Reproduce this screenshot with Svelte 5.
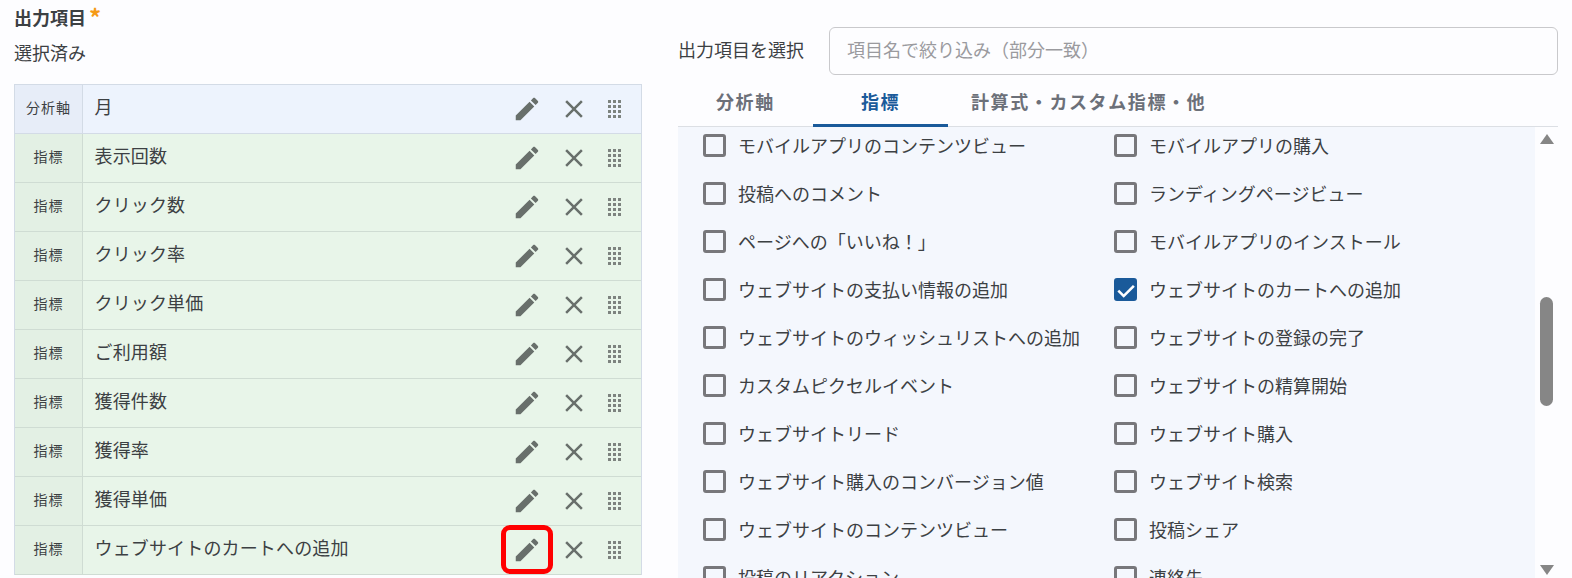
<script>
	const selected = [
		{ kind: '分析軸', name: '月', axis: true },
		{ kind: '指標', name: '表示回数' },
		{ kind: '指標', name: 'クリック数' },
		{ kind: '指標', name: 'クリック率' },
		{ kind: '指標', name: 'クリック単価' },
		{ kind: '指標', name: 'ご利用額' },
		{ kind: '指標', name: '獲得件数' },
		{ kind: '指標', name: '獲得率' },
		{ kind: '指標', name: '獲得単価' },
		{ kind: '指標', name: 'ウェブサイトのカートへの追加', marked: true }
	];

	const tabs = ['分析軸', '指標', '計算式・カスタム指標・他'];

	const options = [
		['モバイルアプリのコンテンツビュー', 'モバイルアプリの購入'],
		['投稿へのコメント', 'ランディングページビュー'],
		['ページへの「いいね！」', 'モバイルアプリのインストール'],
		['ウェブサイトの支払い情報の追加', 'ウェブサイトのカートへの追加'],
		['ウェブサイトのウィッシュリストへの追加', 'ウェブサイトの登録の完了'],
		['カスタムピクセルイベント', 'ウェブサイトの精算開始'],
		['ウェブサイトリード', 'ウェブサイト購入'],
		['ウェブサイト購入のコンバージョン値', 'ウェブサイト検索'],
		['ウェブサイトのコンテンツビュー', '投稿シェア'],
		['投稿のリアクション', '連絡先']
	].flat();

	const checked = 'ウェブサイトのカートへの追加';
</script>

<main class="page">
	<section class="left">
		<h2 class="title">出力項目<span class="req">*</span></h2>
		<p class="sub">選択済み</p>
		<div class="table">
			{#each selected as row}
				<div class="row" class:axis={row.axis}>
					<div class="kind">{row.kind}</div>
					<div class="name">{row.name}</div>
					<div class="edit" class:marked={row.marked}>
						<svg viewBox="0 0 24 24" width="30" height="30"><path d="M3 17.25V21h3.75L17.81 9.94l-3.75-3.75L3 17.25zM20.71 7.04c.39-.39.39-1.02 0-1.41l-2.34-2.34c-.39-.39-1.02-.39-1.41 0l-1.83 1.83 3.75 3.75 1.83-1.83z" /></svg>
					</div>
					<svg class="close" viewBox="0 0 24 24" width="30" height="30"><path d="M19 6.41L17.59 5 12 10.59 6.41 5 5 6.41 10.59 12 5 17.59 6.41 19 12 13.41 17.59 19 19 17.59 13.41 12z" /></svg>
					<svg class="drag" viewBox="0 0 13 18" width="13" height="18">
						{#each [0, 5, 10] as x}
							{#each [0, 5, 10, 15] as y}
								<rect {x} {y} width="3" height="3" />
							{/each}
						{/each}
					</svg>
				</div>
			{/each}
		</div>
	</section>

	<section class="right">
		<div class="search">
			<span class="search-label">出力項目を選択</span>
			<input class="input" type="text" placeholder="項目名で絞り込み（部分一致）" />
		</div>
		<div class="tabs">
			{#each tabs as tab, i}
				<div class="tab" class:active={i === 1}>{tab}</div>
			{/each}
		</div>
		<div class="body">
			<div class="list">
				{#each options as option}
					<label class="option">
						<span class="box" class:on={option === checked}>
							{#if option === checked}
								<svg viewBox="0 0 24 24" width="22" height="22"><path d="M9.5 17.6 4.6 12.7l-2 2 6.9 6.9L21.6 9.5l-2-2z" /></svg>
							{/if}
						</span>
						<span>{option}</span>
					</label>
				{/each}
			</div>
			<div class="scrollbar">
				<span class="arrow up"></span>
				<span class="thumb"></span>
				<span class="arrow down"></span>
			</div>
		</div>
	</section>
</main>

<style>
	:global(body) {
		margin: 0;
		background: #fdfdff;
		overflow: hidden;
	}
	.page {
		display: flex;
		height: 578px;
		overflow: hidden;
		box-sizing: border-box;
		padding: 0 14px;
		gap: 36px;
		font-family: 'Noto Sans CJK JP', 'Noto Sans', sans-serif;
		color: #3c4043;
	}
	.left {
		width: 628px;
		flex: none;
	}
	.title {
		margin: 5px 0 0;
		font-size: 18px;
		line-height: 24px;
		font-weight: 700;
	}
	.req {
		color: #f59a16;
		margin-left: 3px;
		font-size: 24px;
		line-height: 20px;
		vertical-align: -2px;
	}
	.sub {
		margin: 11px 0 0;
		font-size: 18px;
		line-height: 24px;
	}
	.table {
		margin-top: 20px;
		border: 1px solid #d3dbe6;
		border-bottom: none;
	}
	.row {
		display: flex;
		align-items: center;
		height: 49px;
		box-sizing: border-box;
		background: #e8f5e9;
		border-bottom: 1px solid #cfdcd3;
	}
	.row.axis {
		background: #edf3fd;
		border-bottom-color: #d3dbe6;
	}
	.kind {
		width: 68px;
		height: 100%;
		box-sizing: border-box;
		flex: none;
		display: flex;
		align-items: center;
		justify-content: center;
		padding-bottom: 5px;
		font-size: 14px;
		letter-spacing: 1px;
		background: #e3f0e4;
		border-right: 1px solid #cfdcd3;
	}
	.axis .kind {
		background: #e7edf8;
		border-right-color: #d3dbe6;
	}
	.name {
		flex: 1;
		padding: 0 0 6px 11.5px;
		font-size: 18px;
		letter-spacing: 0.15px;
	}
	.edit {
		position: relative;
		display: flex;
	}
	.marked::after {
		content: '';
		position: absolute;
		left: -11px;
		top: -10px;
		width: 42px;
		height: 39px;
		border: 5px solid #ff0000;
		border-radius: 9px;
	}
	svg {
		fill: #686f6b;
		flex: none;
	}
	.close {
		margin-left: 17px;
	}
	.drag {
		margin: 0 20px 0 19px;
		fill: #7d837f;
	}
	.right {
		flex: 1;
		min-width: 0;
		display: flex;
		flex-direction: column;
	}
	.search {
		display: flex;
		align-items: center;
		margin-top: 27px;
		gap: 25px;
	}
	.search-label {
		font-size: 18px;
		white-space: nowrap;
		padding-bottom: 4px;
	}
	.input {
		flex: 1;
		min-width: 0;
		height: 48px;
		box-sizing: border-box;
		border: 1px solid #c9c9cc;
		border-radius: 6px;
		background: transparent;
		padding: 0 17px 4px;
		font: inherit;
		font-size: 18px;
	}
	.input::placeholder {
		color: #9a9a9e;
		opacity: 1;
	}
	.tabs {
		display: flex;
		height: 52px;
		box-sizing: border-box;
		border-bottom: 1px solid #dcdfe4;
	}
	.tab {
		padding: 12px 38px 0;
		font-size: 18px;
		line-height: 28px;
		font-weight: 700;
		letter-spacing: 1.6px;
		color: #6c7079;
		box-sizing: border-box;
		margin-bottom: -1px;
		white-space: nowrap;
	}
	.tab:first-child {
		width: 135px;
	}
	.tab.active {
		width: 135px;
		text-align: center;
		color: #1a5a9a;
		border-bottom: 3px solid #1a5a9a;
	}
	.tab:last-child {
		padding-left: 23px;
	}
	.body {
		flex: 1;
		display: flex;
		min-height: 0;
	}
	.list {
		flex: 1;
		min-width: 0;
		overflow: hidden;
		background: #f4f7fd;
		display: grid;
		grid-template-columns: 411px 1fr;
		grid-auto-rows: 48px;
		align-content: start;
		padding-left: 25px;
	}
	.option {
		display: flex;
		align-items: center;
		gap: 12px;
		font-size: 18px;
		white-space: nowrap;
		position: relative;
		top: -6px;
	}
	.box {
		width: 23px;
		height: 23px;
		box-sizing: border-box;
		border: 3px solid #77777b;
		border-radius: 3px;
		flex: none;
		display: flex;
		align-items: center;
		justify-content: center;
	}
	.box.on {
		background: #1a5a9a;
		border-color: #1a5a9a;
	}
	.box.on svg {
		fill: #fff;
	}
	.scrollbar {
		width: 23px;
		flex: none;
		display: flex;
		flex-direction: column;
		align-items: center;
		position: relative;
	}
	.arrow {
		width: 0;
		height: 0;
		border-left: 7px solid transparent;
		border-right: 7px solid transparent;
	}
	.up {
		margin-top: 7px;
		border-bottom: 10px solid #868686;
	}
	.thumb {
		width: 13px;
		height: 109px;
		margin-top: 153px;
		border-radius: 7px;
		background: #868686;
	}
	.down {
		margin-top: auto;
		margin-bottom: 3px;
		border-top: 10px solid #868686;
	}
</style>
